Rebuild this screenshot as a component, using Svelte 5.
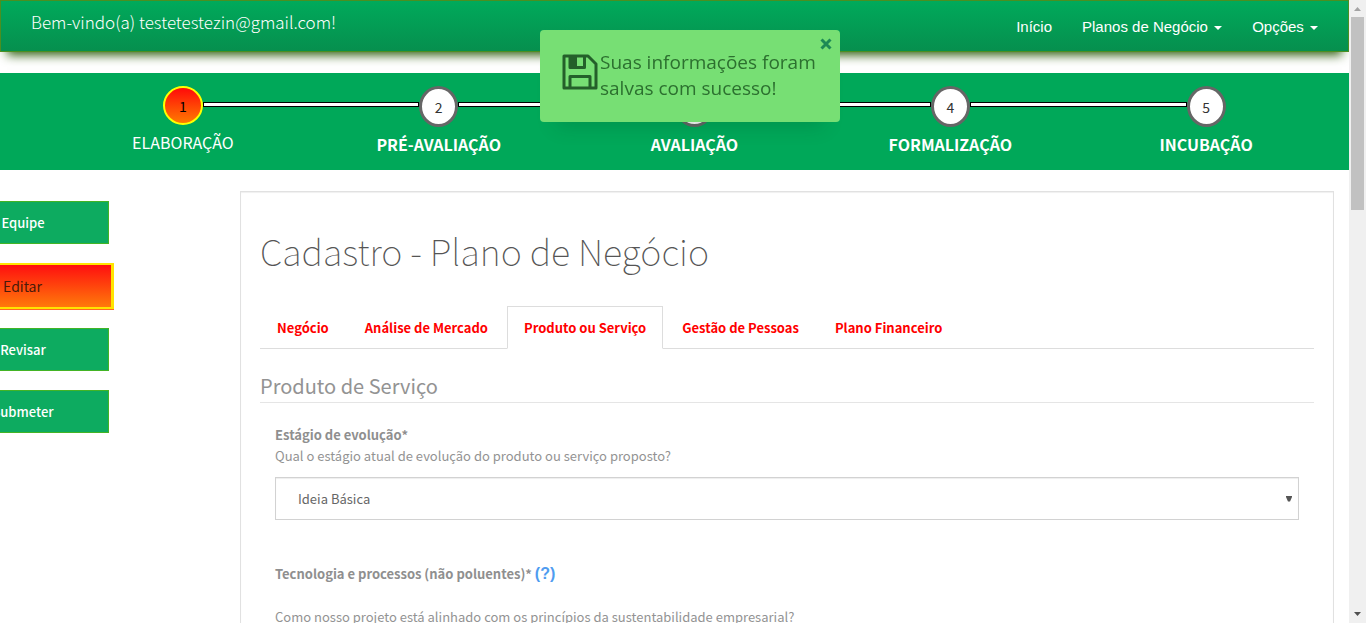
<script>
  const steps = [
    { n: 1, label: 'ELABORAÇÃO', active: true },
    { n: 2, label: 'PRÉ-AVALIAÇÃO' },
    { n: 3, label: 'AVALIAÇÃO' },
    { n: 4, label: 'FORMALIZAÇÃO' },
    { n: 5, label: 'INCUBAÇÃO' }
  ];
  const actions = ['Equipe', 'Editar', 'Revisar', 'Submeter'];
  const tabs = ['Negócio', 'Análise de Mercado', 'Produto ou Serviço', 'Gestão de Pessoas', 'Plano Financeiro'];
  let action = $state('Editar');
  let tab = $state('Produto ou Serviço');
  let toast = $state(true);
</script>

<div class="window">
  <div class="page">
    <header class="navbar">
      <p class="welcome">Bem-vindo(a) testetestezin@gmail.com!</p>
      <nav class="menu">
        <a href="#inicio">Início</a>
        <a href="#planos">Planos de Negócio <i class="caret"></i></a>
        <a href="#opcoes">Opções <i class="caret"></i></a>
      </nav>
    </header>

    <ol class="steps">
      {#each steps as s}
        <li class:active={s.active}>
          <div class="track">
            <span class="line"></span>
            <span class="circle">{s.n}</span>
            <span class="line"></span>
          </div>
          <span class="label">{s.label}</span>
        </li>
      {/each}
    </ol>

    <div class="body">
      <nav class="side">
        {#each actions as a}
          <button type="button" class:current={action === a} onclick={() => (action = a)}>{a}</button>
        {/each}
      </nav>

      <main class="panel">
        <h1>Cadastro - Plano de Negócio</h1>
        <div class="tabs" role="tablist">
          {#each tabs as t}
            <button type="button" role="tab" aria-selected={tab === t} onclick={() => (tab = t)}>{t}</button>
          {/each}
        </div>
        <h2>Produto de Serviço</h2>
        <div class="field">
          <label for="estagio">Estágio de evolução*</label>
          <p>Qual o estágio atual de evolução do produto ou serviço proposto?</p>
          <div class="select">
            <select id="estagio"><option>Ideia Básica</option></select>
            <svg width="6" height="6" viewBox="0 0 6 6" aria-hidden="true"><path d="M0 0h6v1L4 5.500H2L0 1z" fill="#555" /></svg>
          </div>
        </div>
        <div class="field second">
          <strong>Tecnologia e processos (não poluentes)* <a href="#ajuda">(?)</a></strong>
          <p>Como nosso projeto está alinhado com os princípios da sustentabilidade empresarial?</p>
        </div>
      </main>
    </div>
  </div>

  <div class="scrollbar" aria-hidden="true">
    <svg width="17" height="17" viewBox="0 0 17 17"><path d="M5 11h7L8.500 7z" fill="#a3a3a3" /></svg>
    <div class="thumb"></div>
    <svg width="17" height="17" viewBox="0 0 17 17"><path d="M5 6h7L8.500 10z" fill="#505050" /></svg>
  </div>

  {#if toast}
    <div class="toast" role="status">
      <svg class="disk" width="36" height="36" viewBox="0 0 36 36" fill="none" stroke="#24602a" stroke-width="3" stroke-linejoin="round" aria-hidden="true">
        <path d="M2 2H26L34 10V34H2Z" />
        <path d="M8 34V22.500H28V34" />
        <path d="M8 3V13.500H22.500V3" />
        <path d="M8 3H15V13H8Z" fill="#24602a" stroke="none" />
      </svg>
      <p>Suas informações foram salvas com sucesso!</p>
      <button type="button" class="close" aria-label="Fechar" onclick={() => (toast = false)}>
        <svg width="12" height="12" viewBox="0 0 12 12" aria-hidden="true"><path d="M1.500 1.500L10.500 10.500M10.500 1.500L1.500 10.500" stroke="#1d8a55" stroke-width="3" /></svg>
      </button>
    </div>
  {/if}
</div>

<style>
  :global(body) { margin: 0; background: #fff; }
  * { box-sizing: border-box; }
  button, select { font: inherit; }
  p, h1, h2 { margin: 0; }

  .window {
    display: grid;
    grid-template-columns: minmax(0, 1fr) 17px;
    height: 100vh;
    overflow: hidden;
    font: 14px/20px "Noto Sans CJK JP", "Noto Sans CJK SC", sans-serif;
    color: #939393;
  }
  .page { overflow: hidden; min-height: 0; }

  .navbar {
    display: flex;
    justify-content: space-between;
    height: 52px;
    padding: 0 30px;
    border: 1px solid #4b8f21;
    background: linear-gradient(#00aa5b, #068f4e);
    box-shadow: 0 10px 10px -7px #2c5c0c;
    color: #fff;
  }
  .welcome { padding-top: 9px; font-size: 17px; line-height: 24px; font-weight: 300; }
  .menu { display: flex; gap: 30px; padding-top: 16px; font: 15px/20px "Liberation Sans", Arial, sans-serif; }
  .menu a { color: #fff; text-decoration: none; }
  .caret {
    display: inline-block;
    margin-left: 2px;
    vertical-align: middle;
    border: 4px solid transparent;
    border-top-color: #fff;
    border-bottom: 0;
  }

  .steps {
    display: grid;
    grid-template-columns: repeat(5, 1fr);
    margin: 21px 0 0;
    padding: 13px 15px 0 55px;
    height: 97px;
    list-style: none;
    background: #00a859;
    color: #fff;
    text-align: center;
  }
  .track { display: flex; align-items: flex-start; }
  .line { flex: 1; height: 5px; margin-top: 16px; background: #fff; border: 1px solid #000; }
  .line:first-child { border-left: 0; }
  .line:last-child { border-right: 0; }
  li:first-child .line:first-child, li:last-child .line:last-child { visibility: hidden; }
  .circle {
    width: 39px;
    height: 41px;
    border: 3px solid #666;
    border-radius: 50%;
    background: #fff;
    color: #333;
    font-size: 14px;
    line-height: 36px;
  }
  .label { display: block; font-size: 16px; line-height: 20px; padding-top: 7px; font-weight: 700; }
  .active .circle {
    width: 40px;
    height: 39px;
    border: 2px solid #ff0;
    background: linear-gradient(#ff0a0a, #ff7a00);
    color: #000;
  }
  .active .label { font-weight: 400; }

  .body { display: grid; grid-template-columns: 240px minmax(0, 1fr); padding-right: 15px; }
  .side { display: flex; flex-direction: column; gap: 19px; width: 172px; margin: 31px 0 0 -63px; }
  .side button {
    height: 43px;
    padding: 0;
    border: 1px solid #43b425;
    background: #0dab60;
    color: #fff;
    font-size: 13px;
    font-weight: 500;
  }
  .side button.current {
    height: 46px;
    margin: 0 -5px;
    border: 2px solid #ffe400;
    border-right-width: 3px;
    box-shadow: 0 1px #ff6a20;
    background: linear-gradient(#ff0f0f, #ff7a0a);
    color: #4a1a0a;
    font-size: 14px;
    font-weight: 400;
  }

  .panel {
    margin-top: 21px;
    min-height: 600px;
    padding: 33px 19px 0;
    border: 1px solid #e1e1e1;
    box-shadow: inset 0 1px 1px #f0f0f0;
  }
  h1 { font-size: 36px; line-height: 50px; font-weight: 100; color: #555; }
  .tabs { display: flex; gap: 2px; margin-top: 31px; border-bottom: 1px solid #ddd; }
  .tabs button {
    height: 43px;
    margin-bottom: -1px;
    padding: 0 16px;
    border: 1px solid transparent;
    background: none;
    color: #f00;
    font-size: 13px;
    font-weight: 700;
  }
  .tabs button[aria-selected='true'] { border-color: #ddd; border-bottom-color: #fff; background: #fff; }
  h2 { margin-top: 22px; padding-bottom: 1px; border-bottom: 1px solid #e5e5e5; font-size: 20px; line-height: 30px; font-weight: 400; color: #939393; }
  .field { padding: 21px 15px 0; font-size: 13px; line-height: 21px; font-weight: 400; }
  .field label, .field strong { display: block; font-weight: 700; color: #8f8f8f; }
  .select { display: flex; align-items: center; margin-top: 11px; }
  .select svg { margin-left: -13px; pointer-events: none; }
  select {
    width: 100%;
    height: 43px;
    padding: 0 22px;
    border: 1px solid #d2d2d2;
    border-radius: 0;
    box-shadow: inset 0 1px 1px #eee;
    background: #fff;
    color: #666;
    appearance: none;
  }
  .second { padding-top: 43px; }
  .second p { margin-top: 22px; }
  .second a { color: #4f9cf0; font: 700 16px/21px "Liberation Sans", Arial, sans-serif; text-decoration: none; }

  .scrollbar { display: flex; flex-direction: column; background: #f0f0f0; }
  .scrollbar svg { flex: none; }
  .scrollbar svg:last-child { margin-top: auto; }
  .thumb { height: 31%; margin: 0 2px; background: #c1c1c1; }

  .toast {
    position: fixed;
    top: 30px;
    left: 540px;
    display: flex;
    gap: 2px;
    width: 300px;
    height: 92px;
    padding: 19px 20px 0 22px;
    border-radius: 4px;
    background: #77df74;
    box-shadow: 0 20px 20px -16px rgb(0 60 30 / 20%);
    color: #2c702f;
    font: 19px/26px "Open Sans", "Noto Sans", sans-serif;
  }
  .disk { flex: none; margin-top: 5px; }
  .close { position: absolute; top: 8px; right: 8px; display: flex; padding: 0; border: 0; background: none; }
</style>
